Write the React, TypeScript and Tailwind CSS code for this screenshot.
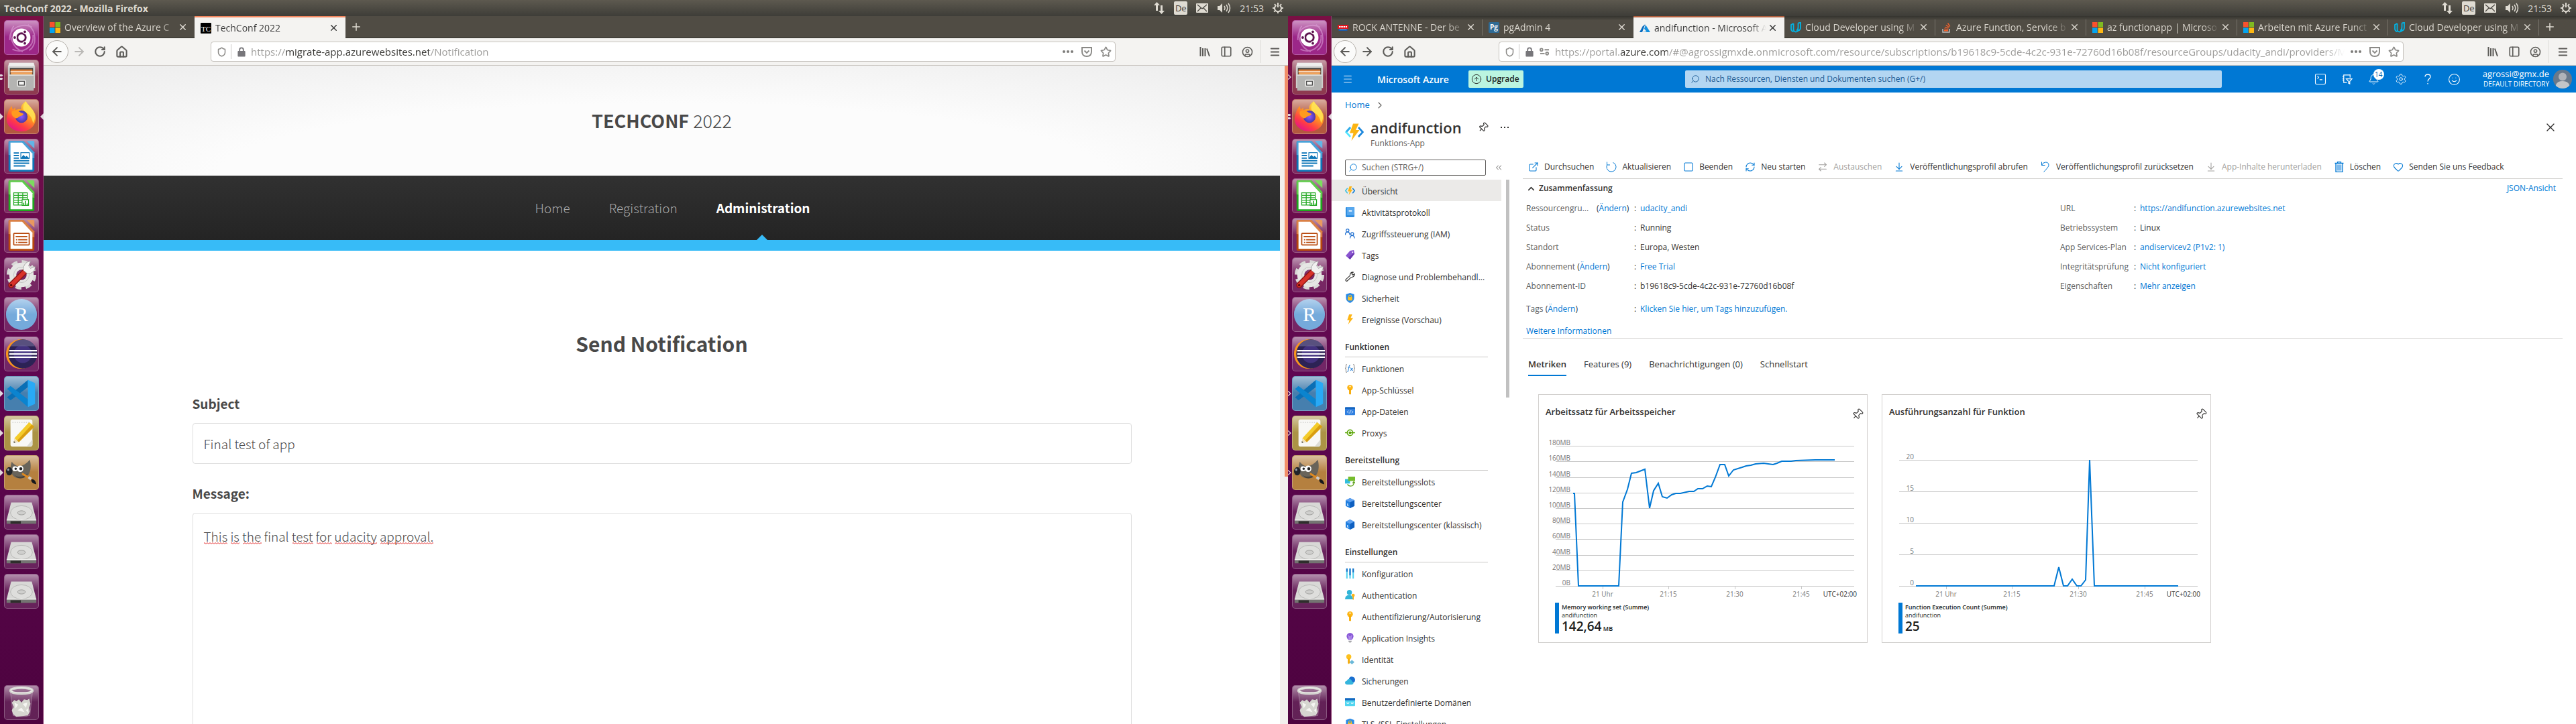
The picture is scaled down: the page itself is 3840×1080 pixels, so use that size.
import React from "react";
import {
  ArrowDownToLine, ArrowLeft, ArrowRight, ArrowRightLeft, Bell, ChevronRight, ChevronUp, ChevronsLeft,
  CircleArrowUp, ExternalLink, Heart, House, Menu, Pin, RefreshCw, RotateCw, Search, Settings, Shield,
  Smile, Square, SquareTerminal, Star, X, CircleUser, PanelLeft, Plus,
} from "lucide-react";

type Children = { children: React.ReactNode };

/* ---------- launcher ---------- */

const Svg52 = ({ children }: Children) => (
  <svg viewBox="0 0 52 52" className="absolute inset-0 size-full" aria-hidden="true">{children}</svg>
);

const UbuntuIcon = () => (
  <Svg52>
    <path d="M8 30C6 10 30 2 42 10M44 22c2 20-18 30-32 22M14 8c-10 14-2 34 14 40M38 46c12-8 12-30-2-40" fill="none" stroke="#e0a8dc" strokeOpacity=".55" strokeWidth="2" />
    <circle cx="26" cy="26" r="14" fill="#fff" />
    <circle cx="26" cy="26" r="6.5" fill="none" stroke="#5e1450" strokeWidth="3" />
    {[[15.5, 26], [31.2, 17], [31.2, 35]].map(([x, y]) => (
      <circle key={y} cx={x} cy={y} r="2.6" fill="#5e1450" stroke="#fff" strokeWidth="1.2" />
    ))}
  </Svg52>
);
const FilesIcon = () => (
  <Svg52>
    <path d="M7 4h38l2 5v34H5V9z" fill="#cfcfcd" />
    <path d="M7 4h38l1 5H6z" fill="#eeeeec" />
    <path d="M8 12h36v12H8z" fill="#3b3a38" />
    <path d="M9 14h34v9H9z" fill="#d97f3c" />
    <path d="M9 17h34v1.500H9z" fill="#fff3e2" />
    <path d="M10 19.500h32V24H10z" fill="#f0a35a" />
    <path d="M7 22h38v25H7z" fill="#b4b4b2" />
    <path d="M7 22h38v2H7z" fill="#dcdcda" />
    <rect x="19" y="30" width="14" height="11" rx="2" fill="#e4e4e2" />
    <rect x="21.500" y="32.500" width="9" height="6" fill="#f4f4f2" stroke="#444" strokeWidth="1.200" />
  </Svg52>
);
const FirefoxIcon = () => (
  <Svg52>
    <defs>
      <linearGradient id="ffBody" x1=".85" y1=".1" x2=".3" y2="1">
        <stop offset="0" stopColor="#ffe14d" /><stop offset=".4" stopColor="#ff9a1f" /><stop offset=".75" stopColor="#ff3a47" /><stop offset="1" stopColor="#e31587" />
      </linearGradient>
      <radialGradient id="ffCore"><stop offset="0" stopColor="#9059ff" /><stop offset="1" stopColor="#4a37a8" /></radialGradient>
    </defs>
    <path d="M5 20c1-5 4-8 6-11 0 3 1 5 2 6l3-3 1 4c3-2 7-2 9-1-2-5 2-10 7-13 1 4 6 7 10 13 4 5 6 10 5 16-1 10-10 18-22 18S3 41 3 30c0-4 1-7 2-10z" fill="url(#ffBody)" />
    <path d="M33 2c1 4 6 7 10 13 5 7 5 15 1 21-2-10-6-14-12-17-5-3-4-11 1-17z" fill="#ffe456" fillOpacity=".85" />
    <circle cx="26" cy="26" r="9.500" fill="url(#ffCore)" />
    <path d="M11 18c5-3 11-1 14 2 2 1 4 1 4 2-1 3-5 2-8 5-2 2-5 2-6 0-3-1-5-5-4-9z" fill="#ff9a1f" />
  </Svg52>
);
const DocIcon = ({ light, dark, children }: Children & { light: string; dark: string }) => (
  <Svg52>
    <path d="M8 2h21l17 18v27a3 3 0 0 1-3 3H9a3 3 0 0 1-3-3V4a2 2 0 0 1 2-2z" fill={dark} />
    <path d="M8 2h21l17 18v9L6 24V4a2 2 0 0 1 2-2z" fill={light} fillOpacity=".7" />
    <path d="M34 2h10a2 2 0 0 1 2 2v10z" fill={light} />
    <path d="M9 5h18l16 17v25H9z" fill="#fff" />
    {children}
  </Svg52>
);
const WriterIcon = () => (
  <DocIcon light="#62b5e6" dark="#0d76b8">
    <path d="M14 21h8M14 25h8M14 29h8M14 33h24M14 37h24M14 41h18" stroke="#0d76b8" strokeWidth="2" />
    <rect x="25" y="20.500" width="13" height="9" fill="#fff" stroke="#0d76b8" strokeWidth="1.200" />
    <path d="M25 29l4-5 3 3 2-1.500 4 3.500z" fill="#0d76b8" />
  </DocIcon>
);
const CalcIcon = () => (
  <DocIcon light="#7bdc5e" dark="#1fa81f">
    <path d="M14 21.500h21v19H14zM14 25.300h21M14 29.100h21M14 32.900h21M14 36.700h21M21 21.500v19M28 21.500v19" fill="none" stroke="#22a822" strokeWidth="1.300" />
    <rect x="27" y="32" width="10" height="9" fill="#fff" stroke="#22a822" strokeWidth="1.200" />
    <path d="M29.500 41v-4M32 41v-7M34.800 41v-3" stroke="#22a822" strokeWidth="1.600" />
  </DocIcon>
);
const ImpressIcon = () => (
  <DocIcon light="#e89860" dark="#b8480c">
    <rect x="14" y="23" width="24" height="18" rx="1" fill="#fff" stroke="#b8480c" strokeWidth="1.800" />
    <path d="M17 28h18M21 33h14M21 37h14M17.500 33h2M17.500 37h2" stroke="#b8480c" strokeWidth="1.800" />
  </DocIcon>
);
const ToolsIcon = () => (
  <Svg52>
    <circle cx="26" cy="26" r="20" fill="none" stroke="#d8d8d6" strokeWidth="6" strokeDasharray="9 6.700" />
    <circle cx="26" cy="26" r="13.500" fill="none" stroke="#e6e6e4" strokeWidth="11" />
    <circle cx="26" cy="26" r="12" fill="none" stroke="#c4c4c2" strokeWidth="1" />
    <path d="M10 42l23-23" stroke="#8f1512" strokeWidth="9" strokeLinecap="round" />
    <path d="M10 42l22-22" stroke="#d8322a" strokeWidth="6" strokeLinecap="round" />
    <circle cx="10" cy="42" r="1.800" fill="#5a0a0a" />
    <path d="M29 19c-1-7 4-14 11-14l-3 7 3 4 7-3c1 7-6 12-12 11z" fill="#f2f2f0" stroke="#999" strokeWidth=".8" />
  </Svg52>
);
const RIcon = () => (
  <Svg52>
    <defs><linearGradient id="rBall" x1="0" y1="0" x2="0" y2="1"><stop offset="0" stopColor="#b4d2ee" /><stop offset=".5" stopColor="#75aadb" /></linearGradient></defs>
    <circle cx="26" cy="26" r="24" fill="url(#rBall)" />
    <text x="26" y="36" textAnchor="middle" fontSize="31" fill="#fff" fontFamily="Liberation Serif, serif">R</text>
  </Svg52>
);
const EclipseIcon = () => (
  <Svg52>
    <circle cx="25" cy="26" r="23" fill="#f7941e" />
    <circle cx="28" cy="26" r="22.500" fill="#2c2255" />
    <circle cx="28" cy="26" r="14" fill="#43327f" />
    <path d="M9 14a22.500 22.500 0 0 1 38 0z" fill="#6b6490" fillOpacity=".7" />
    <path d="M7 21h43M7 26h43M7 31h43" stroke="#fff" strokeWidth="2.400" />
  </Svg52>
);
const CodeIcon = () => (
  <Svg52>
    <path d="M36 5L5 31a1 1 0 0 0 0 2l3 3q1 1 2 0l26-20z" fill="#0a6fb5" />
    <path d="M36 47L5 20a1 1 0 0 1 0-2l3-3q1-1 2 0l26 20z" fill="#0b84cf" />
    <path d="M36 5l11 5v32l-11 5z" fill="#29a9f5" />
  </Svg52>
);
const NotesIcon = () => (
  <Svg52>
    <rect x="9" y="5" width="34" height="42" rx="3" fill="#f8f8f5" />
    <path d="M12 9.500h28" stroke="#bbb" strokeWidth="1" strokeDasharray="1.500 2" />
    <path d="M15 34L38 9l8 7-24 24z" fill="#f4cc2a" />
    <path d="M19 38L42 13l4 3-24 24z" fill="#d99e10" />
    <path d="M15 34l7 6-8 1z" fill="#f0e0b8" />
    <path d="M14.300 38.500l2.500 2.200-2.800.300z" fill="#333" />
    <path d="M43 36v8a3 3 0 0 1-3 3h-6z" fill="#dcdcd4" />
  </Svg52>
);
const GimpIcon = () => (
  <Svg52>
    <path d="M11 9c3 4 7 7 11 7 6 0 12-4 17-10 2 8 2 17-2 23-4 5-12 7-19 5-6-2-9-9-9-14 0-4 1-8 2-11z" fill="#69645a" />
    <path d="M14 29c6 5 16 4 22-2-3 7-10 9-16 7z" fill="#48443c" />
    <circle cx="16" cy="20" r="4" fill="#fff" /><circle cx="24" cy="20" r="5" fill="#fff" />
    <circle cx="17" cy="20" r="1.800" fill="#222" /><circle cx="25" cy="20" r="2.300" fill="#222" />
    <ellipse cx="7" cy="24" rx="5" ry="6.500" fill="#20242a" /><ellipse cx="5.500" cy="21.500" rx="1.500" ry="2" fill="#9aa4b0" />
    <path d="M28 28l14 9" stroke="#e08a20" strokeWidth="3" strokeLinecap="round" />
    <path d="M37 33l4 3" stroke="#ccc" strokeWidth="4" />
    <path d="M41 37c3-2 7 1 8 7-3 0-8-2-8-7z" fill="#15181c" />
  </Svg52>
);
const DiskIcon = () => (
  <Svg52>
    <path d="M10 11h32l7 27H3z" fill="#d8d8d6" />
    <ellipse cx="26" cy="27" rx="17" ry="11" fill="#dededc" stroke="#b4b4b2" strokeWidth="1" />
    <ellipse cx="26" cy="27" rx="6" ry="3.200" fill="#cfcfcd" stroke="#9c9c9a" strokeWidth="1" />
    <path d="M3 38h46v6H3z" fill="#747472" /><path d="M3 37.500h46v1.500H3z" fill="#f4f4f2" />
    <path d="M9 40h16v4H9z" fill="#2e2e2c" />
  </Svg52>
);
const TrashIcon = () => (
  <Svg52>
    <path d="M9 10h34l-4 36q-13 4-26 0z" fill="#fff" fillOpacity=".12" stroke="#fff" strokeOpacity=".3" />
    <path d="M11 26l4-4 3 2 4-3 4 5 4-5 5 1 3-2 2 8-2 6 1 6-3 6-9 1-9 1-5-4-2-6 3-5z" fill="#d6d6d0" />
    <path d="M15 26l6 3-4 6zM28 28l7-2-2 8zM20 38l6-4 5 7zM33 38l3-3 1 7z" fill="#f6f6f2" />
    <ellipse cx="26" cy="7.500" rx="17" ry="4.500" fill="none" stroke="#d4d4d0" strokeWidth="4" />
    <ellipse cx="26" cy="7" rx="17" ry="4" fill="none" stroke="#f4f4f0" strokeWidth="1" />
  </Svg52>
);

const glass = "bg-[#ffffff1f]";
const apps = [
  { name: "Dash", icon: <UbuntuIcon />, bg: "bg-[#9c2788]" },
  { name: "Dateien", icon: <FilesIcon />, bg: "bg-[#8e3a50]" },
  { name: "Firefox", icon: <FirefoxIcon />, bg: "bg-[#b3583f]" },
  { name: "Writer", icon: <WriterIcon />, bg: glass },
  { name: "Calc", icon: <CalcIcon />, bg: glass },
  { name: "Impress", icon: <ImpressIcon />, bg: glass },
  { name: "Systemeinstellungen", icon: <ToolsIcon />, bg: glass },
  { name: "RStudio", icon: <RIcon />, bg: glass },
  { name: "Eclipse", icon: <EclipseIcon />, bg: glass },
  { name: "Code", icon: <CodeIcon />, bg: "bg-[#467fae]" },
  { name: "Notizen", icon: <NotesIcon />, bg: "bg-[#ab9345]" },
  { name: "GIMP", icon: <GimpIcon />, bg: "bg-[#b5803f]" },
  { name: "Laufwerk 1", icon: <DiskIcon />, bg: glass },
  { name: "Laufwerk 2", icon: <DiskIcon />, bg: glass },
  { name: "Laufwerk 3", icon: <DiskIcon />, bg: glass },
];

type Pip = "two" | "full" | "open";
const PipMark = ({ kind }: { kind: Pip }) => (
  <svg viewBox="0 0 5 10" className="absolute top-[21px] -left-[6px] h-[10px] w-[5px]" aria-hidden="true">
    {kind === "two" && <path d="M0 1h3l1.500 1.500L3 4H0zM0 6h3l1.500 1.500L3 9H0z" fill="#e2d8de" />}
    {kind === "full" && <path d="M0 0l5 5-5 5z" fill="#e2d8de" />}
    {kind === "open" && <path d="M0 1.500L4 5 0 8.500" fill="none" stroke="#e2d8de" strokeWidth="1.300" />}
  </svg>
);

const Tile = ({ name, bg, icon, pip, focused }: { name: string; bg: string; icon: React.ReactNode; pip?: Pip; focused?: boolean }) => (
  <li className="relative">
    {pip && <PipMark kind={pip} />}
    <button aria-label={name} className={`relative block size-[52px] rounded-[5px] border border-white/25 ${bg}`}>
      <span className="absolute inset-x-0 top-0 h-6 rounded-t-[4px] bg-linear-to-b from-white/50 to-transparent" />
      {icon}
    </button>
    {focused && (
      <svg viewBox="0 0 5 10" className="absolute top-[21px] left-[54px] h-[10px] w-[5px]" aria-hidden="true"><path d="M5 0L0 5l5 5z" fill="#e2d8de" /></svg>
    )}
  </li>
);

const Launcher = ({ pips }: { pips: Record<string, Pip> }) => (
  <nav aria-label="Starter" className="flex w-[65px] shrink-0 flex-col justify-between border-r border-[#8a3a6c] bg-linear-to-b from-[#7a0f44] via-[#5f0751] via-50% to-[#4d033f] px-[6px] py-[6px]">
    <ul className="flex flex-col gap-[7px]">
      {apps.map((a) => <Tile key={a.name} {...a} pip={pips[a.name]} focused={a.name === "Firefox"} />)}
    </ul>
    <ul><Tile name="Papierkorb" icon={<TrashIcon />} bg={glass} /></ul>
  </nav>
);

/* ---------- system panel ---------- */

const Panel = ({ title }: { title?: string }) => (
  <header className="flex h-6 shrink-0 items-center bg-linear-to-b from-[#5d594f] to-[#3e3d38] px-[6px] font-['Open_Sans',sans-serif] text-[14px] text-[#dfdbd2]">
    {title && <h1 className="font-bold">{title}</h1>}
    <div className="ml-auto flex items-center pr-[1px]">
      <svg viewBox="0 0 16 18" className="mr-[14px] h-[18px] w-4" fill="#dfdbd2" aria-hidden="true">
        <path d="M4.500 0L9 5H6v8H3V5H0zM11.500 18L7 13h3V5h3v8h3z" />
      </svg>
      <span className="mr-[13px] flex h-5 w-5 items-center justify-center rounded-[2px] bg-[#dfdbd2] text-[13px] leading-5 text-[#3e3d38]">De</span>
      <svg viewBox="0 0 18 14" className="mr-[14px] h-[14px] w-[18px]" aria-hidden="true">
        <rect width="18" height="14" rx="1" fill="#dfdbd2" />
        <path d="M2 2l7 6 7-6M2 12l5-5M16 12l-5-5" fill="none" stroke="#45433d" strokeWidth="1.300" />
      </svg>
      <svg viewBox="0 0 20 16" className="mr-[13px] h-4 w-5" fill="none" stroke="#dfdbd2" strokeWidth="1.500" aria-hidden="true">
        <path d="M0 5h3l4-4v14l-4-4H0z" fill="#dfdbd2" stroke="none" /><path d="M10 5q2 3 0 6M13 3q3.500 5 0 10M16 1q5 7 0 14" />
      </svg>
      <time className="mr-[13px]">21:53</time>
      <svg viewBox="0 0 16 16" className="size-4" fill="none" stroke="#dfdbd2" aria-hidden="true">
        <path d="M5.500 4a5 5 0 1 0 5 0" strokeWidth="2" /><path d="M8 0v7" strokeWidth="2" />
        <path d="M3 2l1.500 2M13 2l-1.500 2M0 8h3M13 8h3M2 13.500L4 12M14 13.500L12 12M8 14v2" strokeWidth="2" />
      </svg>
    </div>
  </header>
);

/* ---------- browser frame ---------- */

const favicons = {
  ms: <svg viewBox="0 0 16 16" aria-hidden="true"><path d="M0 0h7.500v7.500H0z" fill="#f8512e" /><path d="M8.500 0H16v7.500H8.500z" fill="#7fba21" /><path d="M0 8.500h7.500V16H0z" fill="#04a4ef" /><path d="M8.500 8.500H16V16H8.500z" fill="#fdb713" /></svg>,
  tc: <svg viewBox="0 0 16 16" aria-hidden="true"><rect width="16" height="16" rx="1" fill="#000" /><text x="8" y="12.500" fontSize="11" textAnchor="middle" fill="#fff" fontFamily="Liberation Serif, serif">TC</text></svg>,
  rock: <svg viewBox="0 0 16 16" aria-hidden="true"><path d="M0 4h16v6H0z" fill="#e3141d" /><path d="M1.500 10h13v3h-13z" fill="#1c5aa6" /><path d="M2 7h12" stroke="#fff" strokeWidth="2" strokeDasharray="2.500 .800" /><path d="M3 11.500h10" stroke="#cfe0f4" strokeWidth=".8" strokeDasharray="1 .500" /></svg>,
  pg: <svg viewBox="0 0 16 16" aria-hidden="true"><rect width="16" height="16" rx="1.500" fill="#2f6a94" /><text x="8" y="11" fontSize="10" fontWeight="700" textAnchor="middle" fill="#fff" fontFamily="Open Sans, sans-serif">Pg</text></svg>,
  azure: <svg viewBox="0 0 16 16" aria-hidden="true"><path d="M8.500 2L4.500 5.500 0 14h4z" fill="#0a6cbf" /><path d="M9 3l-2 6 3.500 4L4 14h12z" fill="#1490df" /></svg>,
  udacity: <svg viewBox="0 0 16 16" fill="none" stroke="#02b3e4" strokeWidth="1.800" aria-hidden="true"><path d="M4.500 2v8.500q0 4 3.500 4t3.500-4" /><path d="M4.500 2L1 4v6q0 3 3.500 4.500M11.500 1.500v6q0 4-2.500 5M11.500 1.500l3.500-.800V8q0 4-3.500 5" /></svg>,
  stack: <svg viewBox="0 0 16 16" fill="none" aria-hidden="true"><path d="M2 10v5h10v-5" stroke="#bcbbbb" strokeWidth="1.500" /><path d="M4 12.800h6M4.200 10.200l6 .600M5 7.300l5.600 1.900M6.800 4.300l4.800 3.500M9.500 1.500l3.300 5" stroke="#f0602c" strokeWidth="1.400" /></svg>,
};
type TabInfo = { icon: keyof typeof favicons; title: string; active?: boolean };

const TabStrip = ({ tabs, shaded }: { tabs: TabInfo[]; shaded?: boolean }) => (
  <div className={`flex h-[33px] shrink-0 items-stretch border-b border-[#33322d] ${shaded ? "bg-linear-to-b from-[#35342f] via-[#504c44] via-20% to-[#504c44]" : "bg-[#504c44]"}`}>
    <div role="tablist" aria-label="Tabs" className="flex min-w-0">
      {tabs.map((t, i) => (
        <div
          key={i}
          role="tab"
          aria-selected={!!t.active}
          className={`relative flex h-[33px] w-[225px] items-center pr-[10px] pl-[9px] ${
            t.active ? `border-t-2 bg-[#f4f3f1] text-[#3c3c3c] ${shaded ? "border-[#b2603f]" : "border-[#f2865e]"}` : "text-[#d8d4cc]"
          }`}
        >
          <span className="size-4 shrink-0">{favicons[t.icon]}</span>
          <span className="ml-[6px] min-w-0 flex-1 overflow-hidden mask-r-from-85% mask-r-to-100% whitespace-nowrap">{t.title}</span>
          <button aria-label="Tab schließen" className="ml-[2px] shrink-0"><X className="size-[15px]" strokeWidth={2.4} /></button>
          {shaded && !t.active && !tabs[i + 1]?.active && <span className="absolute top-[5px] right-0 h-6 w-px bg-[#77736a]" />}
        </div>
      ))}
    </div>
    <button aria-label="Neuer Tab" className="ml-[7px] text-[#dfdbd2]"><Plus className="size-[18px]" strokeWidth={2} /></button>
  </div>
);

const NavBar = ({ url, tint, perms, canForward }: { url: string; tint: string; perms?: boolean; canForward?: boolean }) => (
  <div className="flex h-[41px] shrink-0 items-center border-b border-[#c9c5c0] bg-[#f4f3f1] pl-[3px] text-[#5c5b58]">
    <button aria-label="Zurück" className="flex size-[34px] items-center justify-center rounded-full border border-[#b4b0aa] bg-[#fbfbfa]"><ArrowLeft className="size-5" strokeWidth={2.4} /></button>
    <button aria-label="Vor" className={`ml-[6px] ${canForward ? "" : "text-[#bbb9b6]"}`}><ArrowRight className="size-5" strokeWidth={2.4} /></button>
    <button aria-label="Neu laden" className="ml-3"><RotateCw className="size-[18px]" strokeWidth={2.8} /></button>
    <button aria-label="Startseite" className="ml-[14px]"><House className="size-[19px]" strokeWidth={2.6} /></button>
    <div className="ml-[123px] flex h-[30px] min-w-0 flex-1 items-center rounded-[4px] border border-[#c5c1bc] bg-white pr-[5px] pl-2 text-[#8a8986]">
      <Shield className="size-[15px] shrink-0" strokeWidth={2.4} />
      <span className="ml-[6px] h-[22px] w-px bg-[#c9c7c4]" />
      <svg viewBox="0 0 12 16" className="ml-[9px] h-[15px] w-3 shrink-0" fill="#77767a" aria-hidden="true"><rect y="6.500" width="12" height="9" rx="1" /><path d="M3 7V4.500a3 3 0 0 1 6 0V7" fill="none" stroke="#77767a" strokeWidth="2" /></svg>
      {perms && (
        <svg viewBox="0 0 16 12" className="ml-[9px] h-3 w-[15px] shrink-0" fill="none" stroke="#8a8986" strokeWidth="2" aria-hidden="true"><circle cx="3" cy="3" r="2" /><path d="M8 3h7M1 9h7" /><circle cx="12" cy="9" r="2" /></svg>
      )}
      <input aria-label="Adresse" readOnly value={url} className={`ml-2 h-7 min-w-0 flex-1 bg-clip-text text-[15px] text-transparent outline-none ${tint}`} />
      <button aria-label="Seitenaktionen" className="ml-[9px] flex gap-[2px]">{[0, 1, 2].map((i) => <span key={i} className="size-1 rounded-full bg-[#7b7a78]" />)}</button>
      <button aria-label="Pocket" className="ml-3"><svg viewBox="0 0 16 15" className="h-[15px] w-4" fill="none" stroke="currentColor" strokeWidth="1.900"><path d="M1 1h14v6q0 7-7 7T1 7z" /><path d="M4.500 5.500L8 9l3.500-3.500" /></svg></button>
      <button aria-label="Lesezeichen" className="ml-3"><Star className="size-[17px]" strokeWidth={2.4} /></button>
    </div>
    <button aria-label="Bibliothek" className="ml-[125px]"><svg viewBox="0 0 16 16" className="size-4" fill="none" stroke="currentColor" strokeWidth="2"><path d="M1.500 1v14M5 3v12M8.500 3v12M11 3.500L15 15" /></svg></button>
    <button aria-label="Seitenleiste" className="ml-[15px]"><PanelLeft className="size-[18px]" strokeWidth={2.2} /></button>
    <button aria-label="Konto" className="ml-[14px]"><CircleUser className="size-[17px]" strokeWidth={2.2} /></button>
    <span className="ml-[10px] h-[34px] w-px bg-[#dcdad7]" />
    <button aria-label="Menü" className="mr-[11px] ml-[13px]"><Menu className="size-[17px]" strokeWidth={2.8} /></button>
  </div>
);

const Screen = ({ title, tabs, pips, nav, children, shaded }: Children & { title?: string; tabs: TabInfo[]; pips: Record<string, Pip>; nav: React.ReactNode; shaded?: boolean }) => (
  <section className="flex min-w-0 flex-1 flex-col">
    <Panel title={title} />
    <div className="flex min-h-0 flex-1">
      <Launcher pips={pips} />
      <div className="flex min-w-0 flex-1 flex-col font-['Open_Sans',sans-serif] text-[14px]">
        <TabStrip tabs={tabs} shaded={shaded} />
        {nav}
        {children}
      </div>
    </div>
  </section>
);

/* ---------- conference page ---------- */

/* start and end of each word marked by the spell checker, from the left edge of the field */
const squiggles = [[17, 52], [57, 70], [75, 103], [149, 180], [185, 208], [212, 275], [280, 359]];

const ConfPage = () => (
  <div className="flex min-h-0 flex-1 bg-[#f2efed]">
    <main className="min-w-0 flex-1 overflow-hidden bg-white font-['Noto_Sans_CJK_SC','Noto_Sans',sans-serif] text-[19px] text-[#484848]">
      <div className="flex h-[164px] items-center justify-center bg-[radial-gradient(ellipse_60%_110%_at_50%_100%,#fcfcfc_60%,#ebebeb_125%)]">
        <p className="text-[27px] leading-10 font-light"><b className="font-bold">TECHCONF</b> 2022</p>
      </div>
      <nav className="flex h-24 items-center justify-center gap-[58px] bg-linear-to-b from-[#313131] to-[#242424] pl-8 font-light text-[#a8a8a8]">
        <a href="#home">Home</a>
        <a href="#registration">Registration</a>
        <a href="#administration" className="relative flex h-full items-center font-bold text-white">
          Administration
          <svg viewBox="0 0 16 8" className="absolute bottom-0 left-1/2 -ml-[10px] h-2 w-4" aria-hidden="true"><path d="M8 0l8 8H0z" fill="#37bbf7" /></svg>
        </a>
      </nav>
      <div className="h-4 bg-[#37bbf7]" />
      <form className="mx-auto mt-[114px] flex w-[1400px] max-w-full flex-col">
        <h2 className="text-center text-[30px] leading-[48px] font-bold">Send Notification</h2>
        <label htmlFor="subject" className="mt-[52px] leading-[28px] font-bold">Subject</label>
        <input id="subject" defaultValue="Final test of app" className="mt-[15px] h-[61px] rounded-[4px] border border-[#dedede] px-4 font-light outline-none" />
        <label htmlFor="message" className="mt-[30px] leading-[28px] font-bold">Message:</label>
        <div className="relative mt-[15px]">
          <textarea id="message" spellCheck={false} defaultValue="This is the final test for udacity approval." className="block h-[340px] w-full resize-none rounded-[4px] border border-[#dedede] px-4 pt-5 leading-[28px] font-light outline-none" />
          <svg className="pointer-events-none absolute top-[44px] left-0 h-[3px] w-[400px]" aria-hidden="true">
            <defs><pattern id="wave" width="4" height="3" patternUnits="userSpaceOnUse"><path d="M0 2.500L2 .5l2 2" fill="none" stroke="#e01b1b" /></pattern></defs>
            {squiggles.map(([a, b]) => <rect key={a} x={a} width={b - a} height="3" fill="url(#wave)" />)}
          </svg>
        </div>
      </form>
    </main>
    <div className="ml-[7px] h-[613px] w-[5px] bg-[#f28f69]" />
  </div>
);

/* ---------- portal ---------- */

const S16 = ({ children }: Children) => <svg viewBox="0 0 16 16" className="size-[15px] shrink-0" fill="none" aria-hidden="true">{children}</svg>;
const Bolt = () => <path d="M6.500 0h5L9 5.500h4L5 16l2-7H3.500z" fill="#fdb515" />;
const FnIcon = () => <><path d="M4 4L.8 8 4 12" stroke="#32bedd" strokeWidth="1.500" /><path d="M12 4l3.200 4L12 12" stroke="#0078d4" strokeWidth="1.500" /><path d="M7 1h4L9 6h3L6 15l1.300-6H4.500z" fill="#fdb515" /></>;
const KeyIcon = () => <><circle cx="8" cy="4.500" r="4.500" fill="#fdb515" /><path d="M6.500 7h3v7L8 16l-1.500-2z" fill="#f5a800" /><circle cx="8" cy="2.800" r="1.100" fill="#fff" /></>;
const BoxIcon = () => <><path d="M8 0l7 3.500v9L8 16l-7-3.500v-9z" fill="#1f7fe0" /><path d="M8 0l7 3.500L8 7 1 3.500z" fill="#5ea0ef" /><path d="M8 7l7-3.500v9L8 16z" fill="#0f5fc0" /><path d="M4 8.500v3l1.500 1" stroke="#cfe6ff" strokeWidth="1.400" /></>;
const ShieldLock = () => <><path d="M8 0l6.500 2v6Q14.500 13 8 16 1.500 13 1.500 8V2z" fill="#2a8be8" /><rect x="4.500" y="6.500" width="7" height="5.500" rx=".8" fill="#fdc11f" /><path d="M6 7V5.500a2 2 0 0 1 4 0V7" stroke="#fdc11f" strokeWidth="1.200" /></>;
const Person = ({ x, y }: { x: number; y: number }) => <><circle cx={x} cy={y} r="2.300" stroke="#1f6fd0" strokeWidth="1.300" /><path d={`M${x - 3.500} ${y + 7}q0-4.500 3.500-4.500t3.500 4.500`} stroke="#1f6fd0" strokeWidth="1.300" /></>;

type MenuItem = { label: string; icon: React.ReactNode; current?: boolean };
const menu: { heading?: string; items: MenuItem[] }[] = [
  {
    items: [
      { label: "Übersicht", icon: <FnIcon />, current: true },
      { label: "Aktivitätsprotokoll", icon: <><rect x="1" y="0" width="14" height="16" rx="1.500" fill="#2a8be0" /><path d="M3 0h12v13H3z" fill="#58a8ee" /><path d="M6 6h5" stroke="#fff" strokeWidth="2" /></> },
      { label: "Zugriffssteuerung (IAM)", icon: <><Person x={4} y={3} /><Person x={11.500} y={8.500} /></> },
      { label: "Tags", icon: <><path d="M8 1l6-1 1 6-7 9-7-6z" fill="#8a55d0" /><path d="M8 15l7-9V4L5 12z" fill="#6a38b0" /><circle cx="12" cy="3.500" r="1" fill="#fff" /></> },
      { label: "Diagnose und Problembehandl...", icon: <path d="M1 13l7-6.500q-.5-4 3-5.500l2 .2-2.500 2.500 2 2L15 3.500q.5 4-3 5.300l-2 .2-7 6.500q-2 0-2-2.500z" stroke="#323130" strokeWidth="1.200" /> },
      { label: "Sicherheit", icon: <ShieldLock /> },
      { label: "Ereignisse (Vorschau)", icon: <Bolt /> },
    ],
  },
  {
    heading: "Funktionen",
    items: [
      { label: "Funktionen", icon: <><path d="M3 1.500Q1.500 1.500 1.500 4v2.500L.5 8l1 1.500V12q0 2.500 1.500 2.500M13 1.500q1.500 0 1.500 2.500v2.500l1 1.500-1 1.500V12q0 2.500-1.500 2.500" stroke="#8a8886" strokeWidth="1.100" /><path d="M8.500 3Q7 2.500 6.500 5L5 12q-.5 1.500-1.500 1M4.500 6.500h3.500M8.500 7.500q1.500 0 2 2t2 2M12.500 7.500l-4 4" stroke="#2f86d8" strokeWidth="1.100" /></> },
      { label: "App-Schlüssel", icon: <KeyIcon /> },
      { label: "App-Dateien", icon: <><rect y="1.500" width="16" height="12.500" rx="1" fill="#2f7fe0" /><path d="M0 2.500q0-1 1-1h14q1 0 1 1V4H0z" fill="#0f5fb8" /><path d="M5.500 7L3.500 9l2 2M10.500 7l2 2-2 2M8.700 6.500L7.300 11.500" stroke="#fff" /></> },
      { label: "Proxys", icon: <><circle cx="8" cy="8" r="4.500" stroke="#57a300" strokeWidth="1.500" /><path d="M0 8h4M8 8h8" stroke="#57a300" strokeWidth="1.500" /><circle cx="8" cy="8" r="2.200" fill="#57a300" /></> },
    ],
  },
  {
    heading: "Bereitstellung",
    items: [
      { label: "Bereitstellungsslots", icon: <><path d="M0 4h8v7H0z" fill="#32bedd" /><path d="M5 0h11v7H5z" fill="#76bc2d" /><path d="M4 12q1 3 5 3 5 0 5-6M12 10.500L14 8l2 2.500" stroke="#5ea01a" strokeWidth="1.300" /></> },
      { label: "Bereitstellungscenter", icon: <BoxIcon /> },
      { label: "Bereitstellungscenter (klassisch)", icon: <BoxIcon /> },
    ],
  },
  {
    heading: "Einstellungen",
    items: [
      { label: "Konfiguration", icon: <><path d="M3 0v16M8 0v16M13 0v16" stroke="#50d0ee" strokeWidth="2.200" /><path d="M3 0v5M8 0v11M13 0v6" stroke="#1470c8" strokeWidth="2.200" /></> },
      { label: "Authentication", icon: <><circle cx="7" cy="4" r="4" fill="#32b5d8" /><path d="M0 15q0-7 7-7 5 0 6 7z" fill="#32b5d8" /><circle cx="13" cy="8.500" r="2.500" fill="#fdb515" /><path d="M12.200 10h1.600v5.500h-1.600z" fill="#f5a800" /></> },
      { label: "Authentifizierung/Autorisierung", icon: <KeyIcon /> },
      { label: "Application Insights", icon: <><path d="M8 0a5.500 5.500 0 0 1 5.500 5.500Q13.500 8 10.500 11.500h-5Q2.500 8 2.500 5.500A5.500 5.500 0 0 1 8 0z" fill="#8a5ad8" /><path d="M5.500 12.500h5v1.500l-1.500 1.500H7L5.500 14z" fill="#a8a8ac" /><path d="M6.500 11V5.500L5 4.500M9.500 11V5.500L11 4.500" stroke="#dcc8ff" /></> },
      { label: "Identität", icon: <><circle cx="6" cy="4" r="4" fill="#fdc11f" /><path d="M4.500 7h3v7L6 15.500 4.500 14z" fill="#f5a800" /><path d="M11 9l4 3.500-4 3.500-4-3.500z" fill="#6ab8d8" /></> },
      { label: "Sicherungen", icon: <><path d="M6 6q1-5 5.500-4.500T16 7q0 3-3 4H8z" fill="#1a6fd0" /><path d="M3 14q-3-.5-3-3t3-3q1-3 4-3 3.500.5 4 4 2.500.5 2.500 2.500T11 14z" fill="#35b5dd" /></> },
      { label: "Benutzerdefinierte Domänen", icon: <><rect y="1.500" width="16" height="12.500" rx="1" fill="#50d5f0" /><path d="M0 1.500h16V5H0z" fill="#1568c0" /><path d="M2.500 8l1 2.500 1-2 1 2 1-2.500M9.500 8l1 2.500 1-2 1 2 1-2.500" stroke="#fff" strokeWidth=".8" /></> },
      { label: "TLS-/SSL-Einstellungen", icon: <ShieldLock /> },
    ],
  },
];

const Sidebar = () => (
  <aside className="flex w-[265px] shrink-0 flex-col">
    <div className="flex h-9 shrink-0 items-center pl-5">
      <label className="flex h-6 w-[210px] items-center rounded-[2px] border border-[#605e5c] px-1">
        <Search className="size-[14px] -scale-x-100 text-[#0078d4]" strokeWidth={1.6} />
        <input aria-label="Menü durchsuchen" placeholder="Suchen (STRG+/)" className="ml-[6px] min-w-0 flex-1 text-[12px] outline-none placeholder:text-[#605e5c]" />
      </label>
      <button aria-label="Menü einklappen" className="ml-3 text-[#605e5c]"><ChevronsLeft className="size-[14px]" strokeWidth={1.6} /></button>
    </div>
    <div className="flex min-h-0 flex-1">
      <nav aria-label="Ressourcenmenü" className="w-[253px] shrink-0">
        {menu.map((g, i) => (
          <section key={i}>
            {g.heading && <h3 className="mx-5 flex h-[41px] items-end border-b border-[#c8c6c4] pb-[5px] font-semibold">{g.heading}</h3>}
            <ul>
              {g.items.map((it) => (
                <li key={it.label} className={it.current ? "bg-[#ebeae8]" : ""}>
                  <a href="#menu" className="flex h-8 items-center gap-[10px] pl-5 whitespace-nowrap"><S16>{it.icon}</S16><span className="pt-[3px]">{it.label}</span></a>
                </li>
              ))}
            </ul>
          </section>
        ))}
      </nav>
      <div className="ml-[7px] h-[325px] w-[5px] bg-[#c1c1c1]" />
    </div>
  </aside>
);

type IconProps = { className?: string; strokeWidth?: number };
const line = { fill: "none", stroke: "currentColor", strokeWidth: 1, viewBox: "0 0 16 16", "aria-hidden": true } as const;
const RefreshIcon = ({ className }: IconProps) => <svg {...line} className={className}><path d="M1.500 .5v4.500H6M1.700 4.800A7 7 0 0 0 1 8a7 7 0 1 0 9.500-6.500" /></svg>;
const ResetIcon = ({ className }: IconProps) => <svg {...line} className={className}><path d="M2.500 .5v5h5M2.500 5.500Q4.500 1 8.500 1 13 1 13 5.500 13 8 5.500 15.500" /></svg>;
const DeleteIcon = ({ className }: IconProps) => <svg {...line} className={className}><path d="M4.500 4.500h7v9h-7z" fill="#7fbbec" stroke="none" /><path d="M1.500 2.500h13M5.500 2.500v-2h5v2M3 2.500v13h10v-13" strokeWidth="1.300" /></svg>;

const commands = [
  { label: "Durchsuchen", Icon: ExternalLink }, { label: "Aktualisieren", Icon: RefreshIcon }, { label: "Beenden", Icon: Square },
  { label: "Neu starten", Icon: RefreshCw }, { label: "Austauschen", Icon: ArrowRightLeft, off: true }, { label: "Veröffentlichungsprofil abrufen", Icon: ArrowDownToLine },
  { label: "Veröffentlichungsprofil zurücksetzen", Icon: ResetIcon }, { label: "App-Inhalte herunterladen", Icon: ArrowDownToLine, off: true },
  { label: "Löschen", Icon: DeleteIcon }, { label: "Senden Sie uns Feedback", Icon: Heart },
];

const Link = ({ children }: Children) => <a href="#link" className="text-[#0078d4]">{children}</a>;
const Change = () => <span className="text-[#323130]">(<Link>Ändern</Link>)</span>;

const facts: [React.ReactNode, React.ReactNode][] = [
  [<><span className="w-[105px]">Ressourcengru...</span><Change /></>, <Link>udacity_andi</Link>],
  ["Status", "Running"],
  ["Standort", "Europa, Westen"],
  [<>Abonnement&nbsp;<Change /></>, <Link>Free Trial</Link>],
  ["Abonnement-ID", "b19618c9-5cde-4c2c-931e-72760d16b08f"],
  [<>Tags&nbsp;<Change /></>, <Link>Klicken Sie hier, um Tags hinzuzufügen.</Link>],
];
const factsRight: [string, React.ReactNode][] = [
  ["URL", <Link>https://andifunction.azurewebsites.net</Link>],
  ["Betriebssystem", "Linux"],
  ["App Services-Plan", <Link>andiservicev2 (P1v2: 1)</Link>],
  ["Integritätsprüfung", <Link>Nicht konfiguriert</Link>],
  ["Eigenschaften", <Link>Mehr anzeigen</Link>],
];

type ChartProps = { title: string; rows: { y: number; label: string }[]; points: string; legend: string; value: string; unit?: string };
const ChartCard = ({ title, rows, points, legend, value, unit }: ChartProps) => (
  <article className="flex h-[371px] w-[491px] flex-col border border-[#d2d0ce]">
    <div className="flex h-[43px] items-start justify-between pt-[15px] pr-[5px] pl-[10px]">
      <h3 className="text-[13px] leading-5 font-semibold">{title}</h3>
      <button aria-label="Anheften" className="mt-[5px]"><Pin className="size-[18px] rotate-45" strokeWidth={1.5} /></button>
    </div>
    <svg viewBox="0 44 489 264" className="h-[264px] w-full" fontFamily="Open Sans, sans-serif" fontSize="10" fill="#7a7978" role="img" aria-label={title}>
      {rows.map((r) => (
        <g key={r.y}>
          <path d={`M25 ${r.y + 0.5}H470`} stroke="#c8c8c8" />
          <text x="47" y={r.y - 1} textAnchor="end">{r.label}</text>
        </g>
      ))}
      {([[95, "21 Uhr"], [193, "21:15"], [292, "21:30"], [391, "21:45"]] as [number, string][]).map(([x, l]) => (
        <g key={x}><path d={`M${x + 0.5} 286v5`} stroke="#c8c8c8" /><text x={x} y="302" textAnchor="middle">{l}</text></g>
      ))}
      <text x="474" y="302" textAnchor="end" fill="#323130">UTC+02:00</text>
      <polyline points={points} fill="none" stroke="#0078d4" strokeWidth="2" />
    </svg>
    <div className="mt-[3px] ml-6 flex h-[46px] border-l-[6px] border-[#0078d4] pl-1 text-[9px] text-[#201f1e]">
      <p className="flex flex-col">
        <span className="leading-[14px] font-semibold">{legend}</span>
        <span className="leading-[9px]">andifunction</span>
        <span className="leading-[25px]"><b className="text-[19px] font-semibold">{value}</b>{unit && <span className="font-semibold"> {unit}</span>}</span>
      </p>
    </div>
  </article>
);

const memPoints = "51,148 53,148 59,286 119,286 125,161 132,142 138,118 145,117 158,112 165,170 171,144 178,133 184,153 191,155 198,150 204,148 211,148 224,145 231,145 237,141 244,141 251,137 257,138 263,124 270,105 277,105 283,122 290,113 303,109 309,107 316,106 323,104 335,103 349,105 355,103 362,100 376,100 383,99 412,98 441,98";
const runPoints = "50,286 256,286 263,258 270,286 276,286 283,276 290,286 296,286 303,277 309,98 316,286 441,286";
const memRows = ["0B", "20MB", "40MB", "60MB", "80MB", "100MB", "120MB", "140MB", "160MB", "180MB"].map((label, i) => ({ label, y: Math.round(286 - i * 23.2) }));
const runRows = ["0", "5", "10", "15", "20"].map((label, i) => ({ label, y: 286 - i * 47 }));

const Portal = () => (
  <div className="flex min-h-0 flex-1 flex-col overflow-hidden bg-white text-[12px] text-[#323130]">
    <header className="flex h-10 shrink-0 items-center bg-[#0078d4] pr-[6px] pl-4 text-white">
      <button aria-label="Portalmenü" className="text-[#b8d8f4]"><Menu className="size-4" strokeWidth={1.8} /></button>
      <a href="#portal" className="ml-9 w-[136px] text-[14px] font-semibold">Microsoft Azure</a>
      <button className="flex h-[26px] w-[82px] items-center gap-[6px] rounded-[2px] bg-[#bbf5e0] pl-1 font-semibold text-[#201f1e]"><CircleArrowUp className="size-4" strokeWidth={1.4} />Upgrade</button>
      <label className="ml-[241px] flex h-[26px] max-w-[800px] min-w-0 flex-1 items-center rounded-[2px] bg-[#b3d6f2] pl-2 text-[#1b5a94]">
        <Search className="size-[14px] -scale-x-100" strokeWidth={1.6} />
        <input aria-label="Portal durchsuchen" placeholder="Nach Ressourcen, Diensten und Dokumenten suchen (G+/)" className="ml-2 min-w-0 flex-1 outline-none placeholder:text-[#1b5a94]" />
      </label>
      <div className="ml-auto flex items-center gap-5 [&>button]:flex [&>button]:size-5 [&>button]:items-center [&>button]:justify-center">
        <button aria-label="Cloud Shell"><SquareTerminal className="size-5" strokeWidth={1.3} /></button>
        <button aria-label="Verzeichnisse"><svg viewBox="0 0 18 18" className="size-[17px]" fill="none" stroke="currentColor" strokeWidth="1.300"><path d="M9 14H4V2h10v4M2 4h2M2 7h2M2 10h2M14 1v3M8 8h9l-3.500 4v4l-2-1v-3z" /></svg></button>
        <button aria-label="Benachrichtigungen" className="relative"><Bell className="size-[17px]" strokeWidth={1.4} /><span className="absolute -top-[5px] left-[9px] size-4 rounded-full bg-white text-center text-[10px] leading-4 text-[#0063b1]">14</span></button>
        <button aria-label="Einstellungen"><Settings className="size-[18px]" strokeWidth={1.3} /></button>
        <button aria-label="Hilfe"><svg viewBox="0 0 10 16" className="h-4 w-[10px]" fill="none" stroke="currentColor" strokeWidth="1.300"><path d="M1 4.500Q1 1 5 1t4 3.500C9 7.500 5 7.500 5 11.500M5 14v1.500" /></svg></button>
        <button aria-label="Feedback"><Smile className="size-[19px]" strokeWidth={1.3} /></button>
      </div>
      <button className="ml-8 flex items-center gap-[6px] text-right">
        <span className="leading-[15px]"><span className="block text-[13px]">agrossi@gmx.de</span><span className="block text-[10px]">DEFAULT DIRECTORY</span></span>
        <svg viewBox="0 0 28 28" className="size-7" aria-hidden="true"><clipPath id="face"><circle cx="14" cy="14" r="14" /></clipPath><g clipPath="url(#face)"><path d="M0 0h28v28H0z" fill="#69798a" /><circle cx="14" cy="10.500" r="6" fill="#b0b4b9" /><path d="M3 28q0-11 11-11t11 11z" fill="#c2c5c8" /></g></svg>
      </button>
    </header>
    <nav aria-label="Brotkrümel" className="flex h-[38px] shrink-0 items-center gap-1 pl-5 text-[13px]"><Link>Home</Link><ChevronRight className="ml-[3px] size-4 text-[#605e5c]" strokeWidth={1.6} /></nav>
    <div className="flex h-14 shrink-0 items-start pr-7 pl-5">
      <svg viewBox="0 0 28 28" className="mt-[7px] size-7" fill="none" aria-hidden="true"><path d="M8 7L1.500 14 8 21" stroke="#50e6ff" strokeWidth="2.600" /><path d="M8 7L2 13.500" stroke="#32a9e8" strokeWidth="2.600" /><path d="M20 7l6.500 7-6.500 7" stroke="#1a86dc" strokeWidth="2.600" /><path d="M12 1.500h8.500L16 11h5.500L9.500 27l3-11.500H7z" fill="#fcb514" /></svg>
      <div className="ml-[10px]">
        <h2 className="text-[22px] leading-7 font-semibold">andifunction</h2>
        <p className="leading-5 text-[#605e5c]">Funktions-App</p>
      </div>
      <button aria-label="Anheften" className="mt-[6px] ml-6"><Pin className="size-4 rotate-45" strokeWidth={1.8} /></button>
      <button aria-label="Mehr" className="mt-[13px] ml-[18px] flex gap-[3px]">{[0, 1, 2].map((i) => <span key={i} className="size-[2px] bg-[#323130]" />)}</button>
      <button aria-label="Schließen" className="mt-[4px] ml-auto"><X className="size-5" strokeWidth={1.6} /></button>
    </div>
    <div className="flex min-h-0 flex-1">
      <Sidebar />
      <main className="mx-5 min-w-0 flex-1">
        <div role="toolbar" aria-label="Befehle" className="flex h-[35px] items-center gap-[18px] border-b border-[#d2d0ce] pl-2">
          {commands.map(({ label, Icon, off }) => (
            <button key={label} disabled={off} className={`flex shrink-0 items-center gap-2 whitespace-nowrap ${off ? "text-[#a19f9d]" : ""}`}>
              <Icon className={`size-4 ${off ? "" : "text-[#0078d4]"}`} strokeWidth={1.6} />{label}
            </button>
          ))}
        </div>
        <section className="border-b border-[#d2d0ce]">
          <div className="flex h-[28px] items-center pr-[10px] pl-[5px]">
            <button className="flex items-center gap-[4px] font-semibold"><ChevronUp className="size-[15px]" strokeWidth={2.4} />Zusammenfassung</button>
            <span className="ml-auto"><Link>JSON-Ansicht</Link></span>
          </div>
          <div className="grid grid-cols-[796px_1fr] pt-px pl-[5px]">
            <dl>
              {facts.map(([k, v], i) => (
                <div key={i} className="flex h-[29px] items-center last:mt-[5px]">
                  <dt className="flex w-[161px] text-[#605e5c]">{k}</dt><span className="w-[9px]">:</span><dd>{v}</dd>
                </div>
              ))}
            </dl>
            <dl>
              {factsRight.map(([k, v]) => (
                <div key={k} className="flex h-[29px] items-center"><dt className="w-[110px] text-[#605e5c]">{k}</dt><span className="w-[9px]">:</span><dd>{v}</dd></div>
              ))}
            </dl>
          </div>
          <p className="pt-[9px] pl-[5px] leading-5"><Link>Weitere Informationen</Link></p>
        </section>
        <div role="tablist" aria-label="Bereiche" className="mt-6 flex h-8 gap-[26px] pl-2 text-[13px]">
          {["Metriken", "Features (9)", "Benachrichtigungen (0)", "Schnellstart"].map((t, i) => (
            <button key={t} role="tab" aria-selected={i === 0} className={`border-b-2 ${i === 0 ? "border-[#0078d4] font-semibold" : "border-transparent"}`}>{t}</button>
          ))}
        </div>
        <div className="mt-[27px] flex flex-wrap gap-[21px] pl-[23px]">
          <ChartCard title="Arbeitssatz für Arbeitsspeicher" rows={memRows} points={memPoints} legend="Memory working set (Summe)" value="142,64" unit="MB" />
          <ChartCard title="Ausführungsanzahl für Funktion" rows={runRows} points={runPoints} legend="Function Execution Count (Summe)" value="25" />
        </div>
      </main>
    </div>
  </div>
);

export default function App() {
  return (
    <div className="flex h-screen overflow-hidden">
      <Screen
        title="TechConf 2022 - Mozilla Firefox"
        tabs={[{ icon: "ms", title: "Overview of the Azure C" }, { icon: "tc", title: "TechConf 2022", active: true }]}
        pips={{ Dateien: "two", Firefox: "full", Code: "full", Notizen: "full", GIMP: "full" }}
        nav={<NavBar url="https://migrate-app.azurewebsites.net/Notification" tint="bg-[linear-gradient(90deg,#9a9997_52px,#33322f_52px,#33322f_265px,#9a9997_265px)]" />}
      >
        <ConfPage />
      </Screen>
      <Screen
        shaded
        tabs={[
          { icon: "rock", title: "ROCK ANTENNE - Der be" }, { icon: "pg", title: "pgAdmin 4" }, { icon: "azure", title: "andifunction - Microsoft A", active: true },
          { icon: "udacity", title: "Cloud Developer using M" }, { icon: "stack", title: "Azure Function, Service b" }, { icon: "ms", title: "az functionapp | Microso" },
          { icon: "ms", title: "Arbeiten mit Azure Funct" }, { icon: "udacity", title: "Cloud Developer using M" },
        ]}
        pips={{ Dateien: "open", Firefox: "two", Code: "open", Notizen: "open", GIMP: "open" }}
        nav={<NavBar canForward perms url="https://portal.azure.com/#@agrossigmxde.onmicrosoft.com/resource/subscriptions/b19618c9-5cde-4c2c-931e-72760d16b08f/resourceGroups/udacity_andi/providers/M" tint="bg-[linear-gradient(90deg,#9a9997_98px,#33322f_98px,#33322f_168px,#9a9997_168px,#9a9997_calc(100%-30px),transparent)]" />}
      >
        <Portal />
      </Screen>
    </div>
  );
}
